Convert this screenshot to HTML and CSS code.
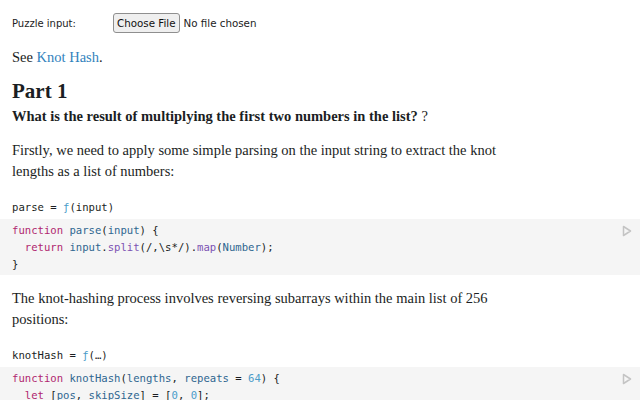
FILE: index.html
```html
<!DOCTYPE html>
<html>
<head>
<meta charset="utf-8">
<link rel="stylesheet" href="styles.css">
</head>
<body>
<div class="form">
  <label class="form-label">Puzzle input:</label>
  <input class="file" type="file">
</div>
<p class="see">See <a href="#">Knot Hash</a>.</p>
<h2 class="h2">Part 1</h2>
<p class="question"><strong>What is the result of multiplying the first two numbers in the list?</strong> ?</p>
<p class="para">Firstly, we need to apply some simple parsing on the input string to extract the knot lengths as a list of numbers:</p>
<div class="cell-label">parse = <span class="fn">ƒ</span>(input)</div>
<div class="code">
<pre><span class="kw">function</span> <span class="def">parse</span>(<span class="def">input</span>) {
  <span class="kw">return</span> <span class="var">input</span>.<span class="prop">split</span>(/,\s*/).<span class="prop">map</span>(<span class="var">Number</span>);
}</pre>
<svg class="play" width="10" height="12" viewBox="0 0 10 12"><path d="M1.5 1.5 L8.5 6 L1.5 10.5 Z" fill="none" stroke="#c4c4c4" stroke-width="1.5" stroke-linejoin="round"/></svg>
</div>
<p class="para para2">The knot-hashing process involves reversing subarrays within the main list of 256 positions:</p>
<div class="cell-label label2">knotHash = <span class="fn">ƒ</span>(…)</div>
<div class="code">
<pre><span class="kw">function</span> <span class="def">knotHash</span>(<span class="def">lengths</span>, <span class="def">repeats</span> = <span class="num">64</span>) {
  <span class="kw">let</span> [<span class="def">pos</span>, <span class="def">skipSize</span>] = [<span class="num">0</span>, <span class="num">0</span>];</pre>
<svg class="play" width="10" height="12" viewBox="0 0 10 12"><path d="M1.5 1.5 L8.5 6 L1.5 10.5 Z" fill="none" stroke="#c4c4c4" stroke-width="1.5" stroke-linejoin="round"/></svg>
</div>
</body>
</html>
```
FILE: styles.css
```css
html, body { margin: 0; padding: 0; background: #fff; overflow: hidden; }
body { color: #1b1e23; font-family: "Liberation Serif", serif; font-size: 14.5px; }
.form { display: flex; align-items: center; padding: 13px 12px 0; height: 20px; font-family: "DejaVu Sans", sans-serif; font-size: 10px; color: #222; }
.form-label { width: 101px; }
.file { font-family: "DejaVu Sans", sans-serif; font-size: 10.3px; color: #222; }
.file::file-selector-button { font-family: "DejaVu Sans", sans-serif; font-size: 10.3px; color: #111; height: 20px; padding: 0 3px; margin-right: 4px; border: 1px solid #8f8f8f; border-radius: 3px; background: #efefef; }
.see { margin: 14px 12px 0; line-height: 21px; }
.see a { color: #3182bd; text-decoration: none; }
.h2 { margin: 10px 12px 0; font-size: 21px; line-height: 26px; font-weight: bold; }
.question { margin: 2px 12px 0; line-height: 20px; }
.para { margin: 14px 12px 0; line-height: 21px; max-width: 518px; }
.para2 { margin-top: 13px; }
.cell-label { margin: 17px 12px 0; font-family: "DejaVu Sans Mono", monospace; font-size: 10.6px; line-height: 17px; }
.label2 { margin-top: 17px; }
.fn { color: #4a9cc9; }
.code { position: relative; margin-top: 3px; background: #f5f5f5; padding: 3px 12px 2px; }
.code pre { margin: 0; font-family: "DejaVu Sans Mono", monospace; font-size: 10.6px; line-height: 17px; color: #1b1e23; }
.kw { color: #b0276f; }
.def { color: #2f6690; }
.var { color: #2f6690; }
.prop { color: #7c52b3; }
.num { color: #4a9cc9; }
.play { position: absolute; right: 8px; top: 6px; }
```
